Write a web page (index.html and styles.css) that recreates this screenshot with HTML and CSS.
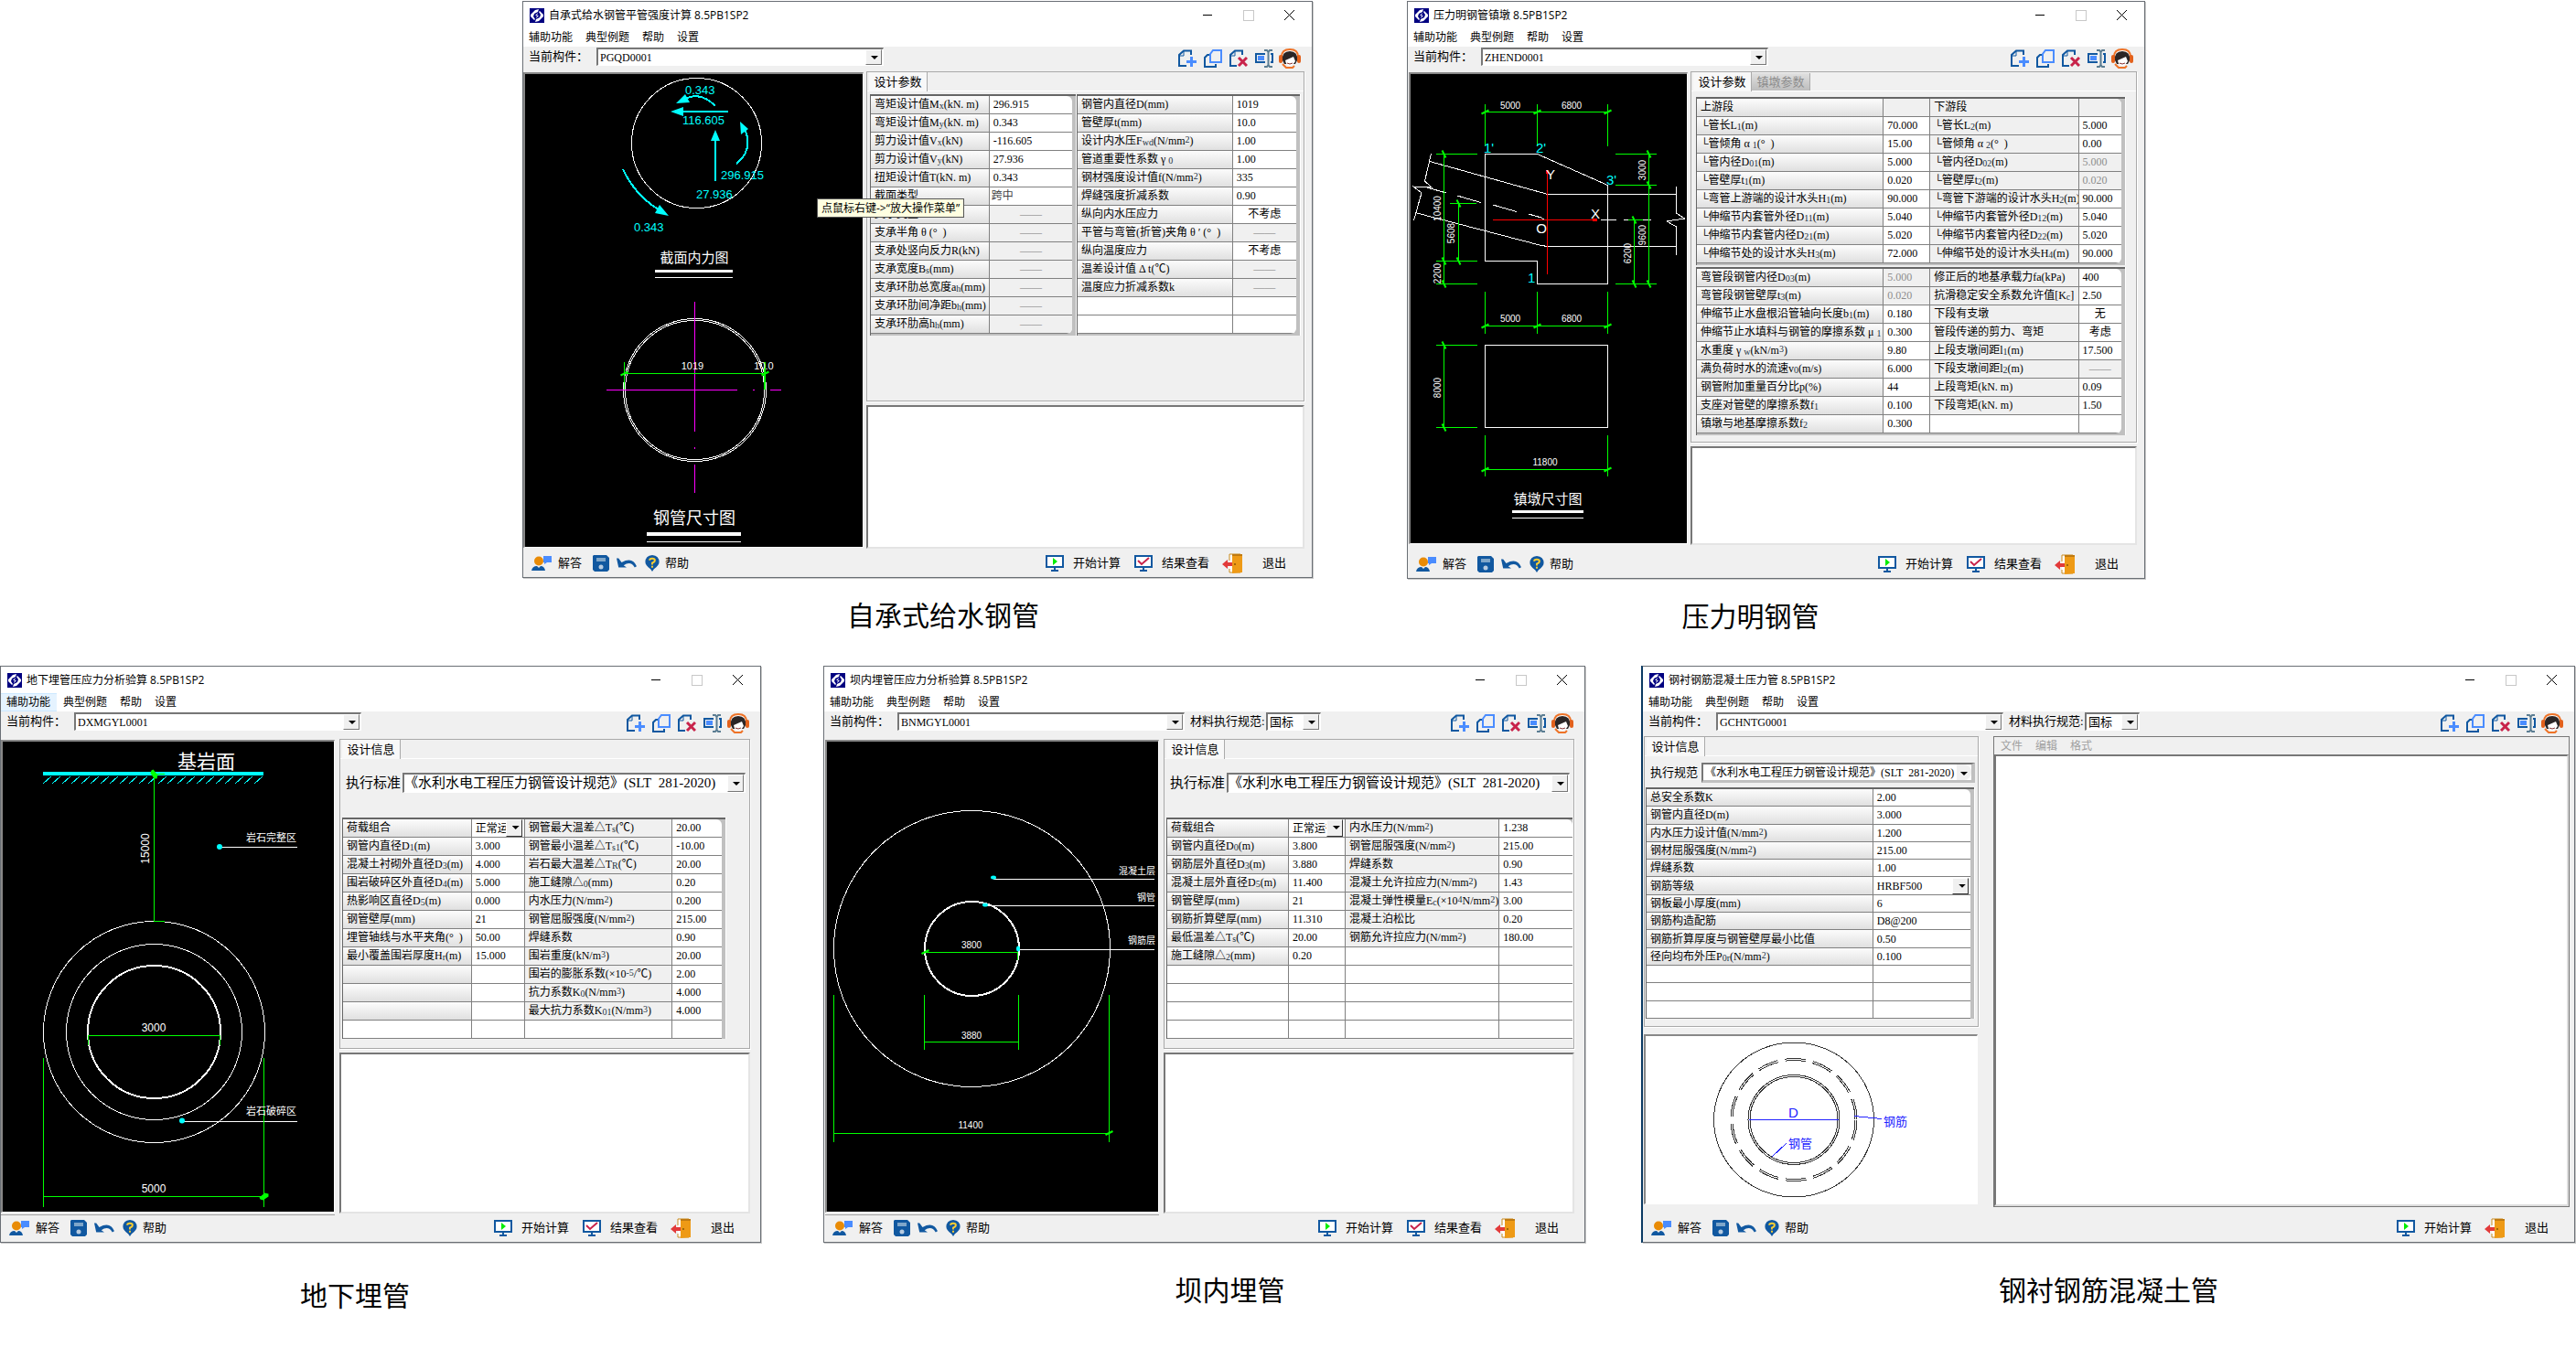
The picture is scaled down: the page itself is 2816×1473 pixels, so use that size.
FILE: index.html
```html
<!DOCTYPE html>
<html lang="zh-CN">
<head>
<meta charset="utf-8">
<title>压力钢管计算程序</title>
<link rel="stylesheet" href="styles.css">
</head>
<body>
<svg class="defs" aria-hidden="true">
  <defs>
    <marker id="tick" markerUnits="userSpaceOnUse" markerWidth="12" markerHeight="12" viewBox="-6 -6 12 12" orient="auto"><path d="M-4 2L4-2" stroke="#0f0" stroke-width="2"/></marker>
    <marker id="blob" markerUnits="userSpaceOnUse" markerWidth="14" markerHeight="14" viewBox="-7 -7 14 14" orient="auto"><path d="M-5 1L1-4L5-3L5 0L-1 4L-4 3Z" fill="#0f0"/></marker>
    <symbol id="i-logo" viewBox="0 0 16 16"><rect width="16" height="16" fill="#000080"/><path d="M10 1L6 2L1 7L1 9L5 13L6 12L4 9L5 6L9 4Z M6 15L10 14L15 9L15 7L11 3L10 4L12 7L11 10L7 12Z" fill="#fff"/><path d="M9 5L6 8H8L7 11L10 8H8Z" fill="#fff"/></symbol>
    <symbol id="i-add" viewBox="0 0 20 20"><path d="M9 18H1V6L6 1.500H14V6" fill="none" stroke="#1158a0" stroke-width="2"/><path d="M1 7H6V1" fill="none" stroke="#1158a0"/><path d="M14.500 8V19M9 13.500H20" stroke="#4a8cff" stroke-width="3"/></symbol>
    <symbol id="i-copy" viewBox="0 0 20 20"><path d="M6 6H4L1 9V19H13V16" fill="none" stroke="#1158a0" stroke-width="2"/><path d="M7 5L10 1H19V14H7Z" fill="none" stroke="#4a8cff" stroke-width="2"/></symbol>
    <symbol id="i-del" viewBox="0 0 20 20"><path d="M8 18H1V6L6 1.500H14V6" fill="none" stroke="#1158a0" stroke-width="2"/><path d="M1 7H6V1" fill="none" stroke="#1158a0"/><path d="M10 9L19 18M19 9L10 18" stroke="#c8234a" stroke-width="3"/></symbol>
    <symbol id="i-rename" viewBox="0 0 20 20"><path d="M11 5H1V14H11M17 5H19V14H17" fill="none" stroke="#1158a0" stroke-width="2"/><path d="M3 7H10V12H3Z" fill="#4a8cff"/><path d="M10 1H13L14.500 3L16 1H19M14.500 2V18M10 19H13L14.500 17L16 19H19" fill="none" stroke="#5b7d92" stroke-width="2"/></symbol>
    <symbol id="i-head" viewBox="0 0 24 22"><path d="M3 9Q3 1 12 1Q21 1 21 9" fill="#fff" stroke="#ee7328" stroke-width="2"/><rect x="0" y="7" width="4" height="9" rx="2" fill="#e2611c"/><rect x="20" y="7" width="4" height="9" rx="2" fill="#e2611c"/><path d="M4 13Q3 3 12 3Q21 3 20 13L18 17H6Z" fill="#2b2626"/><path d="M7 13L16 9L18 14Q15 19 12 19Q8 19 7 13Z" fill="#fff"/><path d="M9 16Q12 18 15 16" stroke="#833" fill="none"/><path d="M4 17L8 21H15L17 19" stroke="#ee7328" stroke-width="2" fill="none"/></symbol>
    <symbol id="i-user" viewBox="0 0 22 18"><circle cx="8" cy="6.500" r="5" fill="#e98b06"/><path d="M0 17Q1 12 6 12L8 14L10 12Q14 12 15 17Z" fill="#1158a0"/><path d="M13 1H22V8H17L14 10V8H13Z" fill="#4a8cff"/></symbol>
    <symbol id="i-disk" viewBox="0 0 18 18"><path d="M1 0H15L18 3V16L16 18H2L0 16V1Z" fill="#1158a0"/><rect x="4" y="3" width="10" height="4" fill="#7fa6c9"/><circle cx="9" cy="13" r="2.500" fill="#b7cbe0"/></symbol>
    <symbol id="i-undo" viewBox="0 0 20 12"><path d="M0 1L2 10H10L7 8Q14 3 18 10L20 9Q16-1 5 5L2 1Z" fill="#1158a0"/></symbol>
    <symbol id="i-help" viewBox="0 0 16 19"><path d="M8 0Q16 1 16 8Q16 12 10 16L8 19L6 16Q0 12 0 8Q0 1 8 0Z" fill="#1158a0"/><path d="M5 6Q5 4 8 4Q11 4 11 6Q11 8 8 9V11M8 12.500V14.500" stroke="#ffcf30" stroke-width="2" fill="none"/></symbol>
    <symbol id="i-run" viewBox="0 0 20 18"><path d="M1 1H19V13H1Z" fill="#fff" stroke="#1158a0" stroke-width="2"/><path d="M10 13V17M6 17H14" stroke="#1158a0" stroke-width="2"/><path d="M8 3V11L13 7Z" fill="#0e0"/></symbol>
    <symbol id="i-check" viewBox="0 0 20 18"><path d="M1 1H19V13H1Z" fill="#fff" stroke="#1158a0" stroke-width="2"/><path d="M10 13V17M6 17H14" stroke="#1158a0" stroke-width="2"/><path d="M4 6L8 10L16 3" stroke="#c8234a" stroke-width="2" fill="none"/></symbol>
    <symbol id="i-exit" viewBox="0 0 22 22"><path d="M8 1H20V21H8V17M8 8V1" fill="#fff" stroke="#c98a1c"/><path d="M11 1H22V21L11 22Z" fill="#ee9a16"/><path d="M11 1H22V3H11Z" fill="#c07a10"/><circle cx="14" cy="12" r="1" fill="#8a5407"/><path d="M0 12L6 7V10H11V14H6V17Z" fill="#e23a3a"/></symbol>
  </defs>
</svg>

<main class="page">
<section class="row row-top">

<figure class="shot shot-self">
  <div class="window">
    <header class="titlebar"><svg class="logo"><use href="#i-logo"/></svg><h2>自承式给水钢管平管强度计算 8.5PB1SP2</h2>
      <button class="wbtn min" aria-label="最小化"></button><button class="wbtn max" aria-label="最大化" disabled></button><button class="wbtn close" aria-label="关闭"></button></header>
    <nav class="menubar"><button>辅助功能</button><button>典型例题</button><button>帮助</button><button>设置</button></nav>
    <div class="toolbar"><label for="c1">当前构件：</label><span class="combo part"><select id="c1"><option>PGQD0001</option></select></span>
      <span class="tools"><button aria-label="新建"><svg><use href="#i-add"/></svg></button><button aria-label="复制"><svg><use href="#i-copy"/></svg></button><button aria-label="删除"><svg><use href="#i-del"/></svg></button><button aria-label="重命名"><svg><use href="#i-rename"/></svg></button><button class="agent" aria-label="客服"><svg><use href="#i-head"/></svg></button></span></div>
    <div class="work work-self">
      <div class="canvas">
        <svg viewBox="14 82 369 517" class="cad">
          <g class="w"><circle cx="201.500" cy="157.500" r="71"/><circle cx="199.500" cy="427.500" r="78"/><circle cx="199.500" cy="427.500" r="76"/><path d="M156 304.500H241M147 593.500H250"/><path d="M156 297.500H241" stroke-width="3"/><path d="M147 585H250" stroke-width="4"/></g>
          <g class="c" stroke-width="2"><path d="M222 117Q204 99 186 111M236 123H180M222 199V150M245 180Q264 165 254 142M121 186Q135 216 163 232"/></g>
          <g class="cf"><path d="M179 114L189 104L194 113ZM173 123L187 118V128ZM222 143L217 155H227ZM249 134L258 142L250 148ZM171 237L161 225L156 234Z"/></g>
          <g class="ct t13"><text x="189" y="104">0.343</text><text x="186" y="137">116.605</text><text x="228" y="197">296.915</text><text x="201" y="218">27.936</text><text x="133" y="254">0.343</text></g>
          <g class="m"><path d="M199.500 331V473M199.500 490V492M199.500 509V540M103 427.500H246M263 427.500H265M282 427.500H294"/></g>
          <g class="g"><path d="M122.500 409.500H276.500" marker-start="url(#tick)" marker-end="url(#tick)"/><path d="M122.500 397V427"/><path d="M276 397V427" stroke-width="2"/></g>
          <g class="wt mid"><text x="197" y="405" class="t11">1019</text><text x="275" y="405" class="t11">10.0</text><text x="199" y="288" class="t15">截面内力图</text><text x="199" y="574" class="t18">钢管尺寸图</text></g>
        </svg>
      </div>
      <div class="side">
        <section class="panel p-self">
          <div class="tabs"><button class="tab on">设计参数</button></div>
          <div class="body pair">
            <div class="frame foot"><table class="k-self-l"><colgroup><col><col></colgroup>
              <tr><th>弯矩设计值M<sub>x</sub>(kN. m)</th><td>296.915</td></tr>
              <tr><th>弯矩设计值M<sub>y</sub>(kN. m)</th><td>0.343</td></tr>
              <tr><th>剪力设计值V<sub>x</sub>(kN)</th><td>-116.605</td></tr>
              <tr><th>剪力设计值V<sub>y</sub>(kN)</th><td>27.936</td></tr>
              <tr><th>扭矩设计值T(kN. m)</th><td>0.343</td></tr>
              <tr><th>截面类型</th><td class="soft">跨中</td></tr>
              <tr><th>支承类型</th><td class="off">——</td></tr>
              <tr><th>支承半角 θ (°&nbsp; )</th><td class="off">——</td></tr>
              <tr><th>支承处竖向反力R(kN)</th><td class="off">——</td></tr>
              <tr><th>支承宽度B<sub>s</sub>(mm)</th><td class="off">——</td></tr>
              <tr><th>支承环肋总宽度a<sub>h</sub>(mm)</th><td class="off">——</td></tr>
              <tr><th>支承环肋间净距b<sub>h</sub>(mm)</th><td class="off">——</td></tr>
              <tr><th>支承环肋高h<sub>h</sub>(mm)</th><td class="off">——</td></tr>
            </table></div>
            <div class="frame foot"><table class="k-self-r"><colgroup><col><col></colgroup>
              <tr><th>钢管内直径D(mm)</th><td>1019</td></tr>
              <tr><th>管壁厚t(mm)</th><td>10.0</td></tr>
              <tr><th>设计内水压F<sub>wd</sub>(N/mm<sup>2</sup>)</th><td>1.00</td></tr>
              <tr><th>管道重要性系数 γ <sub>0</sub></th><td>1.00</td></tr>
              <tr><th>钢材强度设计值f(N/mm<sup>2</sup>)</th><td>335</td></tr>
              <tr><th>焊缝强度折减系数</th><td>0.90</td></tr>
              <tr><th>纵向内水压应力</th><td class="pick">不考虑</td></tr>
              <tr><th>平管与弯管(折管)夹角 θ ′ (°&nbsp; )</th><td class="off">——</td></tr>
              <tr><th>纵向温度应力</th><td class="pick">不考虑</td></tr>
              <tr><th>温差设计值 Δ t(℃)</th><td class="off">——</td></tr>
              <tr><th>温度应力折减系数k</th><td class="off">——</td></tr>
              <tr><td></td><td></td></tr>
              <tr><td></td><td></td></tr>
            </table></div>
          </div>
        </section>
        <textarea class="log" aria-label="计算信息"></textarea>
      </div>
      <div class="tip" role="tooltip">点鼠标右键-&gt;“放大操作菜单”</div>
    </div>
    <footer class="status"><button class="txt"><svg class="s-user"><use href="#i-user"/></svg>解答</button><button aria-label="保存"><svg><use href="#i-disk"/></svg></button><button aria-label="撤销"><svg><use href="#i-undo"/></svg></button><button class="help"><svg><use href="#i-help"/></svg>帮助</button>
      <span class="actions"><button><svg><use href="#i-run"/></svg>开始计算</button><button><svg><use href="#i-check"/></svg>结果查看</button><button class="exit"><svg><use href="#i-exit"/></svg>退出</button></span></footer>
  </div>
  <figcaption class="lean-right">自承式给水钢管</figcaption>
</figure>

<figure class="shot shot-open">
  <div class="window">
    <header class="titlebar"><svg class="logo"><use href="#i-logo"/></svg><h2>压力明钢管镇墩 8.5PB1SP2</h2>
      <button class="wbtn min" aria-label="最小化"></button><button class="wbtn max" aria-label="最大化" disabled></button><button class="wbtn close" aria-label="关闭"></button></header>
    <nav class="menubar"><button>辅助功能</button><button>典型例题</button><button>帮助</button><button>设置</button></nav>
    <div class="toolbar"><label for="c2">当前构件：</label><span class="combo part"><select id="c2"><option>ZHEND0001</option></select></span>
      <span class="tools"><button aria-label="新建"><svg><use href="#i-add"/></svg></button><button aria-label="复制"><svg><use href="#i-copy"/></svg></button><button aria-label="删除"><svg><use href="#i-del"/></svg></button><button aria-label="重命名"><svg><use href="#i-rename"/></svg></button><button class="agent" aria-label="客服"><svg><use href="#i-head"/></svg></button></span></div>
    <div class="work work-open">
      <div class="canvas">
        <svg viewBox="12 80 302 513" class="cad">
          <g class="w"><path d="M93.500 167.500H150.500L227.500 201.500V309.500H150.500V284.500H93.500ZM93.500 376.500H227.500V466.500H93.500Z"/>
            <path d="M33 175.500L162 211.500H302.500M17 231.500L155 267.500L162 268.500H302.500M30 204L51 210M63 213L89 220.500M102 223L128 230.500M141 233L155 237L158 239.500H169M220 239.500H237M245 239.500H275"/>
            <path d="M34.500 167L27.500 197L35 204L15 203L24 210L15.500 240M302.500 203V232L311.500 238L292 241L302.500 247V278"/><path d="M123 565.500H201"/><path d="M123 558.500H201" stroke-width="3"/></g>
          <g class="g"><path d="M93.500 121.500H150.500" marker-start="url(#tick)" marker-end="url(#tick)"/><path d="M150.500 121.500H227.500" marker-end="url(#tick)"/><path d="M93.500 355.500H150.500" marker-start="url(#tick)" marker-end="url(#tick)"/><path d="M150.500 355.500H227.500" marker-end="url(#tick)"/><path d="M93.500 512.500H227.500" marker-start="url(#tick)" marker-end="url(#tick)"/>
            <path d="M48.500 167.500V284.500" marker-start="url(#tick)" marker-end="url(#tick)"/><path d="M48.500 284.500V309.500" marker-end="url(#tick)"/><path d="M64.500 221.500V284.500" marker-start="url(#tick)" marker-end="url(#tick)"/><path d="M48.500 376.500V466.500" marker-start="url(#tick)" marker-end="url(#tick)"/><path d="M272.500 167.500V201.500" marker-start="url(#tick)" marker-end="url(#tick)"/><path d="M272.500 201.500V309.500" marker-end="url(#tick)"/><path d="M256.500 239.500V309.500" marker-start="url(#tick)" marker-end="url(#tick)"/>
            <path d="M93.500 113V159M150.500 113V159M227.500 113V159M93.500 318V364M150.500 318V364M227.500 318V364M93.500 475V520M227.500 475V520M40 167.500H85M40 284.500H85M40 309.500H85M55 221.500H84M40 376.500H85M40 466.500H85M236 167.500H281M236 201.500H281M236 309.500H281M250 239.500H266"/></g>
          <g class="r"><path d="M102 239.500H215M161.500 186V299"/><path d="M211 239.500H216M161.500 185V189" stroke-width="3"/></g>
          <g class="wt mid t10"><text x="121" y="118">5000</text><text x="188" y="118">6800</text><text x="121" y="351">5000</text><text x="188" y="351">6800</text><text x="159" y="508">11800</text>
            <text transform="translate(45 227) rotate(-90)">10400</text><text transform="translate(60 254) rotate(-90)">5608</text><text transform="translate(45 298) rotate(-90)">2200</text><text transform="translate(45 423) rotate(-90)">8000</text><text transform="translate(269 185) rotate(-90)">3000</text><text transform="translate(269 256) rotate(-90)">9600</text><text transform="translate(253 276) rotate(-90)">6200</text></g>
          <g class="wt mid t15"><text x="155" y="254">O</text><text x="165" y="195">Y</text><text x="214" y="238">X</text><text x="162" y="550">镇墩尺寸图</text></g>
          <g class="ct t15"><text x="92" y="166">1'</text><text x="149" y="166">2'</text><text x="226" y="201">3'</text><text x="140" y="308">1</text></g>
        </svg>
      </div>
      <div class="side">
        <section class="panel p-open">
          <div class="tabs"><button class="tab on">设计参数</button><button class="tab" disabled>镇墩参数</button></div>
          <div class="body stack">
            <div class="frame foot"><table class="k-open flat3"><colgroup><col><col><col><col></colgroup>
              <tr><th>上游段</th><td class="off"></td><th>下游段</th><td class="off"></td></tr>
              <tr><th>└管长L<sub>1</sub>(m)</th><td>70.000</td><th>└管长L<sub>2</sub>(m)</th><td>5.000</td></tr>
              <tr><th>└管倾角 α <sub>1</sub>(°&nbsp; )</th><td>15.00</td><th>└管倾角 α <sub>2</sub>(°&nbsp; )</th><td>0.00</td></tr>
              <tr><th>└管内径D<sub>01</sub>(m)</th><td>5.000</td><th>└管内径D<sub>02</sub>(m)</th><td class="dim">5.000</td></tr>
              <tr><th>└管壁厚t<sub>1</sub>(m)</th><td>0.020</td><th>└管壁厚t<sub>2</sub>(m)</th><td class="dim">0.020</td></tr>
              <tr><th>└弯管上游端的设计水头H<sub>1</sub>(m)</th><td>90.000</td><th>└弯管下游端的设计水头H<sub>2</sub>(m)</th><td>90.000</td></tr>
              <tr><th>└伸缩节内套管外径D<sub>11</sub>(m)</th><td>5.040</td><th>└伸缩节内套管外径D<sub>12</sub>(m)</th><td>5.040</td></tr>
              <tr><th>└伸缩节内套管内径D<sub>21</sub>(m)</th><td>5.020</td><th>└伸缩节内套管内径D<sub>22</sub>(m)</th><td>5.020</td></tr>
              <tr><th>└伸缩节处的设计水头H<sub>3</sub>(m)</th><td>72.000</td><th>└伸缩节处的设计水头H<sub>4</sub>(m)</th><td>90.000</td></tr>
            </table></div>
            <div class="frame foot"><table class="k-open flat3"><colgroup><col><col><col><col></colgroup>
              <tr><th>弯管段钢管内径D<sub>03</sub>(m)</th><td class="dim">5.000</td><th>修正后的地基承载力fa(kPa)</th><td>400</td></tr>
              <tr><th>弯管段钢管壁厚t<sub>3</sub>(m)</th><td class="dim">0.020</td><th>抗滑稳定安全系数允许值[K<sub>c</sub>]</th><td>2.50</td></tr>
              <tr><th>伸缩节止水盘根沿管轴向长度b<sub>1</sub>(m)</th><td>0.180</td><th>下段有支墩</th><td class="pick">无</td></tr>
              <tr><th>伸缩节止水填料与钢管的摩擦系数 μ <sub>1</sub></th><td>0.300</td><th>管段传递的剪力、弯矩</th><td class="pick">考虑</td></tr>
              <tr><th>水重度 γ <sub>w</sub>(kN/m<sup>3</sup>)</th><td>9.80</td><th>上段支墩间距l<sub>1</sub>(m)</th><td>17.500</td></tr>
              <tr><th>满负荷时水的流速v<sub>0</sub>(m/s)</th><td>6.000</td><th>下段支墩间距l<sub>2</sub>(m)</th><td class="off">——</td></tr>
              <tr><th>钢管附加重量百分比p(%)</th><td>44</td><th>上段弯矩(kN. m)</th><td>0.09</td></tr>
              <tr><th>支座对管壁的摩擦系数f<sub>1</sub></th><td>0.100</td><th>下段弯矩(kN. m)</th><td>1.50</td></tr>
              <tr><th>镇墩与地基摩擦系数f<sub>2</sub></th><td>0.300</td><td></td><td></td></tr>
            </table></div>
          </div>
        </section>
        <textarea class="log" aria-label="计算信息"></textarea>
      </div>
    </div>
    <footer class="status"><button class="txt"><svg class="s-user"><use href="#i-user"/></svg>解答</button><button aria-label="保存"><svg><use href="#i-disk"/></svg></button><button aria-label="撤销"><svg><use href="#i-undo"/></svg></button><button class="help"><svg><use href="#i-help"/></svg>帮助</button>
      <span class="actions"><button><svg><use href="#i-run"/></svg>开始计算</button><button><svg><use href="#i-check"/></svg>结果查看</button><button class="exit"><svg><use href="#i-exit"/></svg>退出</button></span></footer>
  </div>
  <figcaption class="lean-left">压力明钢管</figcaption>
</figure>
</section>

<section class="row row-bottom">

<figure class="shot shot-under">
  <div class="window">
    <header class="titlebar"><svg class="logo"><use href="#i-logo"/></svg><h2>地下埋管压应力分析验算 8.5PB1SP2</h2>
      <button class="wbtn min" aria-label="最小化"></button><button class="wbtn max" aria-label="最大化" disabled></button><button class="wbtn close" aria-label="关闭"></button></header>
    <nav class="menubar"><button class="hot">辅助功能</button><button>典型例题</button><button>帮助</button><button>设置</button></nav>
    <div class="toolbar roomy"><label for="c3">当前构件：</label><span class="combo part"><select id="c3"><option>DXMGYL0001</option></select></span>
      <span class="tools"><button aria-label="新建"><svg><use href="#i-add"/></svg></button><button aria-label="复制"><svg><use href="#i-copy"/></svg></button><button aria-label="删除"><svg><use href="#i-del"/></svg></button><button aria-label="重命名"><svg><use href="#i-rename"/></svg></button><button class="agent" aria-label="客服"><svg><use href="#i-head"/></svg></button></span></div>
    <div class="work work-under">
      <div class="canvas ruled">
        <svg viewBox="3 90 362 514" class="cad">
          <g class="c"><path d="M47 125H288" stroke-width="4"/><path d="M56 128L47 136M66 128L57 136M77 128L68 136M87 128L78 136M98 128L89 136M108 128L99 136M119 128L110 136M129 128L120 136M140 128L131 136M150 128L141 136M161 128L152 136M171 128L162 136M182 128L173 136M192 128L183 136M203 128L194 136M213 128L204 136M224 128L215 136M234 128L225 136M245 128L236 136M255 128L246 136M266 128L257 136M276 128L267 136M287 128L278 136"/></g>
          <g class="w"><circle cx="168.500" cy="407.500" r="121"/><circle cx="168.500" cy="407.500" r="96"/><circle cx="168.500" cy="407.500" r="72.500" stroke-width="2"/><path d="M240 205.500H325M199 505.500H325"/></g>
          <g class="cf"><circle cx="240" cy="205" r="3"/><circle cx="199" cy="504.500" r="3"/></g>
          <g class="g"><path d="M168.500 125.500V286.500M96.500 411.500H240.500M47.500 587.500H288.500" marker-start="url(#blob)" marker-end="url(#blob)"/><path d="M168 125.500H180M168 286.500H180M96.500 411V422M240.500 411V422M47.500 436V599M288.500 436V599"/></g>
          <g class="wt mid t12"><text x="168" y="407">3000</text><text x="168" y="583">5000</text><text transform="translate(163 207) rotate(-90)">15000</text></g>
          <g class="wt"><text x="194" y="119" class="t21">基岩面</text><text x="269" y="199" class="t11">岩石完整区</text><text x="269" y="498" class="t11">岩石破碎区</text></g>
        </svg>
      </div>
      <div class="side">
        <section class="panel p-buried">
          <div class="tabs"><button class="tab on">设计信息</button></div>
          <div class="body">
            <div class="code"><label for="s3">执行标准</label><span class="combo"><select id="s3"><option>《水利水电工程压力钢管设计规范》(SLT&nbsp; 281-2020)</option></select></span></div>
            <div class="frame f-under"><table class="k-under flat3"><colgroup><col><col><col><col></colgroup>
              <tr><th>荷载组合</th><td class="drop"><span class="combo flat"><select aria-label="荷载组合"><option>正常运行工况</option></select></span></td><th>钢管最大温差△T<sub>s</sub>(℃)</th><td>20.00</td></tr>
              <tr><th>钢管内直径D<sub>1</sub>(m)</th><td>3.000</td><th>钢管最小温差△T<sub>s1</sub>(℃)</th><td>-10.00</td></tr>
              <tr><th>混凝土衬砌外直径D<sub>3</sub>(m)</th><td>4.000</td><th>岩石最大温差△T<sub>R</sub>(℃)</th><td>20.00</td></tr>
              <tr><th>围岩破碎区外直径D<sub>4</sub>(m)</th><td>5.000</td><th>施工缝隙△<sub>0</sub>(mm)</th><td>0.20</td></tr>
              <tr><th>热影响区直径D<sub>5</sub>(m)</th><td>0.000</td><th>内水压力(N/mm<sup>2</sup>)</th><td>0.200</td></tr>
              <tr><th>钢管壁厚(mm)</th><td>21</td><th>钢管屈服强度(N/mm<sup>2</sup>)</th><td>215.00</td></tr>
              <tr><th>埋管轴线与水平夹角(°&nbsp; )</th><td>50.00</td><th>焊缝系数</th><td>0.90</td></tr>
              <tr><th>最小覆盖围岩厚度H<sub>r</sub>(m)</th><td>15.000</td><th>围岩重度(kN/m<sup>3</sup>)</th><td>20.00</td></tr>
              <tr><th></th><td></td><th>围岩的膨胀系数(×10<sup>-5</sup>/℃)</th><td>2.00</td></tr>
              <tr><th></th><td></td><th>抗力系数K<sub>0</sub>(N/mm<sup>3</sup>)</th><td>4.000</td></tr>
              <tr><th></th><td></td><th>最大抗力系数K<sub>01</sub>(N/mm<sup>3</sup>)</th><td>4.000</td></tr>
              <tr><td></td><td></td><td></td><td></td></tr>
            </table></div>
          </div>
        </section>
        <textarea class="log" aria-label="计算信息"></textarea>
      </div>
    </div>
    <footer class="status"><button class="txt"><svg class="s-user"><use href="#i-user"/></svg>解答</button><button aria-label="保存"><svg><use href="#i-disk"/></svg></button><button aria-label="撤销"><svg><use href="#i-undo"/></svg></button><button class="help"><svg><use href="#i-help"/></svg>帮助</button>
      <span class="actions"><button><svg><use href="#i-run"/></svg>开始计算</button><button><svg><use href="#i-check"/></svg>结果查看</button><button class="exit"><svg><use href="#i-exit"/></svg>退出</button></span></footer>
  </div>
  <figcaption class="lean-left low">地下埋管</figcaption>
</figure>

<figure class="shot shot-dam">
  <div class="window">
    <header class="titlebar"><svg class="logo"><use href="#i-logo"/></svg><h2>坝内埋管压应力分析验算 8.5PB1SP2</h2>
      <button class="wbtn min" aria-label="最小化"></button><button class="wbtn max" aria-label="最大化" disabled></button><button class="wbtn close" aria-label="关闭"></button></header>
    <nav class="menubar"><button>辅助功能</button><button>典型例题</button><button>帮助</button><button>设置</button></nav>
    <div class="toolbar roomy"><label for="c4">当前构件：</label><span class="combo part"><select id="c4"><option>BNMGYL0001</option></select></span><label for="m4" class="mat">材料执行规范:</label><span class="combo mat-combo"><select id="m4"><option>国标</option></select></span>
      <span class="tools"><button aria-label="新建"><svg><use href="#i-add"/></svg></button><button aria-label="复制"><svg><use href="#i-copy"/></svg></button><button aria-label="删除"><svg><use href="#i-del"/></svg></button><button aria-label="重命名"><svg><use href="#i-rename"/></svg></button><button class="agent" aria-label="客服"><svg><use href="#i-head"/></svg></button></span></div>
    <div class="work work-dam">
      <div class="canvas ruled">
        <svg viewBox="14 92 362 513" class="cad">
          <g class="w"><circle cx="172.500" cy="318" r="151"/><circle cx="172.500" cy="318" r="51.500" stroke-width="2"/><path d="M196 241.500H372M187 270.500H372M223 318.500H372"/></g>
          <g class="cf"><ellipse cx="196" cy="240" rx="3" ry="2"/><ellipse cx="187" cy="270" rx="3" ry="2"/><ellipse cx="223" cy="318" rx="2" ry="3"/></g>
          <g class="g"><path d="M121.500 321.500H223M120.500 419.500H223.500M21.500 519.500H322.500" marker-start="url(#tick)" marker-end="url(#tick)"/><path d="M120.500 368V428M223.500 368V428M21.500 368V529M322.500 368V529M222.500 321V330"/></g>
          <g class="wt mid t10"><text x="172" y="317">3800</text><text x="172" y="416">3880</text><text x="171" y="514">11400</text></g>
          <g class="wt end t10"><text x="373" y="236">混凝土层</text><text x="373" y="265">钢管</text><text x="373" y="312">钢筋层</text></g>
        </svg>
      </div>
      <div class="side">
        <section class="panel p-buried">
          <div class="tabs"><button class="tab on">设计信息</button></div>
          <div class="body">
            <div class="code"><label for="s4">执行标准</label><span class="combo"><select id="s4"><option>《水利水电工程压力钢管设计规范》(SLT&nbsp; 281-2020)</option></select></span></div>
            <div class="frame bare"><table class="k-dam flat3"><colgroup><col><col><col><col></colgroup>
              <tr><th>荷载组合</th><td class="drop"><span class="combo flat"><select aria-label="荷载组合"><option>正常运行工况</option></select></span></td><th>内水压力(N/mm<sup>2</sup>)</th><td>1.238</td></tr>
              <tr><th>钢管内直径D<sub>0</sub>(m)</th><td>3.800</td><th>钢管屈服强度(N/mm<sup>2</sup>)</th><td>215.00</td></tr>
              <tr><th>钢筋层外直径D<sub>3</sub>(m)</th><td>3.880</td><th>焊缝系数</th><td>0.90</td></tr>
              <tr><th>混凝土层外直径D<sub>5</sub>(m)</th><td>11.400</td><th>混凝土允许拉应力(N/mm<sup>2</sup>)</th><td>1.43</td></tr>
              <tr><th>钢管壁厚(mm)</th><td>21</td><th>混凝土弹性模量E<sub>c</sub>(×10<sup>4</sup>N/mm<sup>2</sup>)</th><td>3.00</td></tr>
              <tr><th>钢筋折算壁厚(mm)</th><td>11.310</td><th>混凝土泊松比</th><td>0.20</td></tr>
              <tr><th>最低温差△T<sub>s</sub>(℃)</th><td>20.00</td><th>钢筋允许拉应力(N/mm<sup>2</sup>)</th><td>180.00</td></tr>
              <tr><th>施工缝隙△<sub>2</sub>(mm)</th><td>0.20</td><td></td><td></td></tr>
              <tr><td></td><td></td><td></td><td></td></tr>
              <tr><td></td><td></td><td></td><td></td></tr>
              <tr><td></td><td></td><td></td><td></td></tr>
              <tr><td></td><td></td><td></td><td></td></tr>
            </table></div>
          </div>
        </section>
        <textarea class="log" aria-label="计算信息"></textarea>
      </div>
    </div>
    <footer class="status"><button class="txt"><svg class="s-user"><use href="#i-user"/></svg>解答</button><button aria-label="保存"><svg><use href="#i-disk"/></svg></button><button aria-label="撤销"><svg><use href="#i-undo"/></svg></button><button class="help"><svg><use href="#i-help"/></svg>帮助</button>
      <span class="actions"><button><svg><use href="#i-run"/></svg>开始计算</button><button><svg><use href="#i-check"/></svg>结果查看</button><button class="exit"><svg><use href="#i-exit"/></svg>退出</button></span></footer>
  </div>
  <figcaption class="lean-right">坝内埋管</figcaption>
</figure>

<figure class="shot shot-lined">
  <div class="window navy">
    <header class="titlebar"><svg class="logo"><use href="#i-logo"/></svg><h2>钢衬钢筋混凝土压力管 8.5PB1SP2</h2>
      <button class="wbtn min" aria-label="最小化"></button><button class="wbtn max" aria-label="最大化" disabled></button><button class="wbtn close" aria-label="关闭"></button></header>
    <nav class="menubar"><button>辅助功能</button><button>典型例题</button><button>帮助</button><button>设置</button></nav>
    <div class="toolbar"><label for="c5">当前构件：</label><span class="combo part"><select id="c5"><option>GCHNTG0001</option></select></span><label for="m5" class="mat">材料执行规范:</label><span class="combo mat-combo"><select id="m5"><option>国标</option></select></span>
      <span class="tools"><button aria-label="新建"><svg><use href="#i-add"/></svg></button><button aria-label="复制"><svg><use href="#i-copy"/></svg></button><button aria-label="删除"><svg><use href="#i-del"/></svg></button><button aria-label="重命名"><svg><use href="#i-rename"/></svg></button><button class="agent" aria-label="客服"><svg><use href="#i-head"/></svg></button></span></div>
    <div class="work work-lined">
      <div class="side">
        <section class="panel p-lined">
          <div class="tabs"><button class="tab on">设计信息</button></div>
          <div class="body">
            <div class="code small"><label for="s5">执行规范</label><span class="combo soft-end"><select id="s5"><option>《水利水电工程压力钢管设计规范》(SLT&nbsp; 281-2020)</option></select></span></div>
            <div class="frame f-lined"><table class="k-lined"><colgroup><col><col></colgroup>
              <tr><th>总安全系数K</th><td>2.00</td></tr>
              <tr><th>钢管内直径D(m)</th><td>3.000</td></tr>
              <tr><th>内水压力设计值(N/mm<sup>2</sup>)</th><td>1.200</td></tr>
              <tr><th>钢材屈服强度(N/mm<sup>2</sup>)</th><td>215.00</td></tr>
              <tr><th>焊缝系数</th><td>1.00</td></tr>
              <tr><th>钢筋等级</th><td class="drop"><span class="combo flat"><select aria-label="钢筋等级"><option>HRBF500</option></select></span></td></tr>
              <tr><th>钢板最小厚度(mm)</th><td>6</td></tr>
              <tr><th>钢筋构造配筋</th><td>D8@200</td></tr>
              <tr><th>钢筋折算厚度与钢管壁厚最小比值</th><td>0.50</td></tr>
              <tr><th>径向均布外压P<sub>0r</sub>(N/mm<sup>2</sup>)</th><td>0.100</td></tr>
              <tr><td></td><td></td></tr>
              <tr><td></td><td></td></tr>
              <tr><td></td><td></td></tr>
            </table></div>
          </div>
        </section>
        <div class="canvas paper">
          <svg viewBox="9 415 362 175" class="cad">
            <g class="k"><ellipse cx="171" cy="502.500" rx="87.500" ry="84.500"/><ellipse cx="171" cy="502.500" rx="69" ry="67" stroke-dasharray="23 8"/><ellipse cx="171" cy="502.500" rx="67" ry="65" stroke-dasharray="22.300 7.800"/><ellipse cx="171" cy="502.500" rx="50" ry="49"/><ellipse cx="171" cy="502.500" rx="48" ry="47"/></g>
            <g class="b"><path d="M122 502.500H220M147 543L163 528M237 498.500L267 501.500"/></g>
            <g class="bt"><text x="165" y="500" class="t15">D</text><text x="165" y="533" class="t13">钢管</text><text x="269" y="509" class="t13">钢筋</text></g>
          </svg>
        </div>
      </div>
      <section class="editor">
        <nav class="editmenu"><button disabled>文件</button><button disabled>编辑</button><button disabled>格式</button></nav>
        <textarea aria-label="计算书"></textarea>
      </section>
    </div>
    <footer class="status"><button class="txt"><svg class="s-user"><use href="#i-user"/></svg>解答</button><button aria-label="保存"><svg><use href="#i-disk"/></svg></button><button aria-label="撤销"><svg><use href="#i-undo"/></svg></button><button class="help"><svg><use href="#i-help"/></svg>帮助</button>
      <span class="actions"><button><svg><use href="#i-run"/></svg>开始计算</button><button class="exit"><svg><use href="#i-exit"/></svg>退出</button></span></footer>
  </div>
  <figcaption>钢衬钢筋混凝土管</figcaption>
</figure>
</section>
</main>
</body>
</html>
```
FILE: styles.css
```css
:root {
  --face: #f0f0f0;
  --line: #808080;
  --strip: #c0c0c0;
  --song: "Liberation Serif", "Noto Sans CJK SC", serif;
  --ui: "Open Sans", "Noto Sans CJK SC", sans-serif;
}
* { box-sizing: border-box; }
body { margin: 0; background: #fff; color: #000; font: 12px/16px var(--song); }
button, select, textarea { font: inherit; color: inherit; margin: 0; border-radius: 0; }
button { background: none; border: 0; padding: 0; }
.defs { position: absolute; width: 0; height: 0; }

/* Page rows */
.page { min-height: 100vh; }
.row { display: grid; }
.row-top { padding-top: 1px; grid-template-columns: 571fr 864fr 103fr 807fr 471fr; }
.row-bottom { padding-top: 36px; grid-template-columns: 832fr 68fr 833fr 62fr 1020fr 1fr; }
.shot { margin: 0; min-width: 0; }
.shot-self { grid-column: 2; }
.shot-open { grid-column: 4; }
.shot-under { grid-column: 1; }
.shot-dam { grid-column: 3; }
.shot-lined { grid-column: 5; }
figcaption { font: 30px/40px "Noto Sans CJK SC", sans-serif; text-align: center; margin-top: 19px; }
.row-bottom figcaption { margin-top: 30px; }
.row-bottom figcaption.low { margin-top: 36px; }
.lean-right { padding-left: 56px; }
.lean-left { padding-right: 56px; }

/* Window chrome */
.window { background: var(--face); border: 1px solid #6a6f75; box-shadow: 1px 1px 0 #c8c8c8; }
.window.navy { border-left-color: #0b3a63; box-shadow: -1px 0 0 #0b3a63, 1px 1px 0 #c8c8c8; }
.titlebar { display: flex; align-items: center; height: 29px; padding: 0 2px 0 7px; background: #fff; }
.logo { width: 16px; height: 16px; margin-right: 5px; }
h2 { flex: 1; margin: 0; font: 12px/16px var(--ui); white-space: nowrap; }
.wbtn { display: flex; align-items: center; justify-content: center; width: 45px; height: 28px; }
.wbtn::before { content: ""; display: block; width: 10px; height: 10px; }
.min::before { height: 1px; background: #000; }
.max::before { border: 1px solid #c8c8c8; }
.close::before { width: 11px; height: 11px; background: linear-gradient(45deg, transparent 46%, #000 46% 54%, transparent 54%), linear-gradient(-45deg, transparent 46%, #000 46% 54%, transparent 54%); }
.menubar { display: flex; height: 20px; background: #fff; }
.menubar button { padding: 0 7px; font: 12px/18px var(--ui); border: 1px solid transparent; border-width: 1px 0; }
.menubar button:first-child { padding-left: 6px; }
.menubar .hot { background: #e5f3ff; border-color: #cce8ff; }

.toolbar { display: flex; align-items: flex-start; height: 27px; padding: 1px 12px 0 6px; font-size: 13px; }
.toolbar.roomy { height: 30px; }
.toolbar label { width: 74px; line-height: 20px; white-space: nowrap; }
.toolbar .mat { width: 83px; margin-left: 6px; }
.part { width: 314px; }
.mat-combo { width: 60px; }
.tools { display: flex; gap: 8px; margin: 1px 0 0 auto; }
.tools svg { display: block; width: 20px; height: 20px; }
.tools .agent { margin-left: -2px; }
.agent svg { width: 24px; height: 22px; }

/* Sunken combo boxes */
.combo { position: relative; display: block; height: 20px; background: #fff; border: solid; border-width: 2px 1px 1px 2px; border-color: #777 #fff #fff #777; }
.combo select { display: block; width: 100%; height: 100%; padding: 0 18px 0 2px; border: 0; background: none; appearance: none; font-size: 12px; line-height: 16px; }
.mat-combo select { font-size: 13px; }
.combo::before { content: ""; position: absolute; top: 0; right: 1px; bottom: 0; width: 16px; background: var(--face); border: 1px solid; border-color: #fff #777 #777 #fff; pointer-events: none; }
.combo::after { content: ""; position: absolute; top: 7px; right: 5px; width: 8px; height: 4px; background: #000; clip-path: polygon(0 0, 100% 0, 50% 100%); pointer-events: none; }
.combo.flat { height: 19px; border: 0; }
.combo.flat select { padding-left: 4px; }
.combo.flat::before { right: 2px; border-color: #fff #333 #333 #fff; }
.combo.soft-end { border-right: 4px solid var(--strip); border-bottom: 3px solid var(--strip); }
.combo.soft-end::before { background: var(--face); border: 0; right: 0; border-radius: 0 8px 8px 0; }
.combo.soft-end::after { right: 4px; }

/* Working area */
.work { position: relative; display: grid; min-height: 522px; }
.work-self { grid-template-columns: 372fr 479fr; column-gap: 3px; padding-right: 8px; }
.work-open { grid-template-columns: 305fr 488fr; column-gap: 3px; padding: 0 8px 5px 1px; }
.work-under, .work-dam { grid-template-columns: 365fr 449fr; column-gap: 5px; padding-right: 11px; min-height: 519px; }
.work-dam { padding-left: 1px; }
.work-lined { grid-template-columns: 366fr 630fr; column-gap: 16px; padding: 0 5px 7px 1px; }
.canvas { margin: 1px 0; min-width: 0; background: #000; border: solid; border-width: 2px 1px 1px 2px; border-color: #888 #fff #fff #888; overflow: hidden; }
.canvas svg { display: block; width: 100%; height: 100%; }
.canvas.ruled { box-shadow: 0 2px 0 var(--face), 0 3px 0 #a0a0a0; }
.side { display: flex; flex-direction: column; gap: 4px; min-width: 0; }
.log { display: block; width: 100%; flex: 1; padding: 0; resize: none; background: #fff; border: 2px solid; border-color: #777 #e4e4e4 #e4e4e4 #777; }
.tip { position: absolute; left: 321px; top: 139px; height: 21px; padding: 0 4px; font: 12px/19px var(--ui); white-space: nowrap; background: #ffffe1; border: 1px solid #555; }

/* Tab panels */
.panel { border: 1px solid #a9a9a9; box-shadow: 1px 1px 0 #fff; }
.p-self { min-height: 361px; }
.p-open { min-height: 406px; }
.p-buried { min-height: 339px; }
.p-lined { min-height: 318px; }
.tabs { display: flex; height: 21px; padding-left: 2px; border-bottom: 1px solid #fff; }
.tab { width: 64px; height: 21px; font-size: 13px; line-height: 19px; background: #f8f8f8; border-right: 1px solid #aaa; }
.tab:disabled { height: 19px; margin-top: 1px; color: #8d8d8d; background: linear-gradient(#e0e0e0, #bdbdbd); }
.pair { display: grid; grid-template-columns: 225fr 244fr; column-gap: 1px; padding: 3px 4px 0 3px; }
.stack { display: grid; row-gap: 2px; padding: 6px 12px 0 5px; }
.code { display: grid; grid-template-columns: 60px 1fr; align-items: center; column-gap: 2px; padding: 15px 4px 27px 6px; font-size: 15px; }
.code label { line-height: 22px; white-space: nowrap; }
.code .combo { height: 22px; }
.code select { font-size: 15px; line-height: 19px; padding-left: 0; }
.code .combo::after { top: 8px; }
.code.small { grid-template-columns: 54px 1fr; padding: 7px 3px 5px 6px; font-size: 13px; }
.code.small select { font-size: 12px; padding-left: 2px; }

/* Parameter grids */
.frame { min-width: 0; background: var(--strip); border-top: 2px solid #666; border-left: 1px solid #666; padding-right: 4px; align-self: start; box-shadow: 1px 0 0 #fff; }
.frame.foot { padding-bottom: 2px; }
.f-under { margin: 0 26px 0 2px; }
.frame.bare { margin: 0 1px 0 2px; padding-right: 0; }
.f-lined { margin: 0 4px 0 1px; }
table { width: 100%; table-layout: fixed; border-collapse: separate; border-spacing: 0; background: #fff; border-radius: 0 6px 6px 0; overflow: hidden; }
.f-under table, .f-lined table, .bare table { border-radius: 0 6px 0 0; }
th, td { height: 20px; padding: 0 0 0 4px; border: solid var(--line); border-width: 0 1px 1px 0; font: 12px/19px var(--song); text-align: left; white-space: nowrap; overflow: hidden; }
.f-lined table { height: 251px; }
.f-lined th, .f-lined td { height: 19px; line-height: 18px; }
.f-lined .combo.flat { height: 18px; }
tr > :last-child { border-right: 0; }
th { background: linear-gradient(#fcfcfc, #e0e0e0); }
.flat3 th:nth-child(3) { background: var(--face); }
td.off { background: var(--face); color: #777; text-align: center; padding: 0; }
td.dim { background: var(--face); color: #8d8d8d; }
td.soft { padding-left: 2px; color: #444; }
td.pick { text-align: center; padding: 0; }
td.drop { padding: 0; }
sub, sup { font-size: 10px; line-height: 0; color: #234; }
sub { vertical-align: -1px; }
sup { vertical-align: 2px; }
.k-self-l col:first-child { width: 59%; }
.k-self-r col:first-child { width: 71%; }
.k-open col:nth-child(1) { width: 44%; }
.k-open col:nth-child(2) { width: 11%; }
.k-open col:nth-child(3) { width: 35%; }
.k-under col:nth-child(1) { width: 34%; }
.k-under col:nth-child(2) { width: 14%; }
.k-under col:nth-child(3) { width: 39%; }
.k-dam col:nth-child(1) { width: 30%; }
.k-dam col:nth-child(2) { width: 14%; }
.k-dam col:nth-child(3) { width: 38%; }
.k-lined col:first-child { width: 70%; }

/* Lined pipe window */
.work-lined .side { gap: 8px; }
.canvas.paper { flex: 1; margin: 0 1px 3px 0; min-height: 0; background: #fff; }
.editor { display: flex; flex-direction: column; border: 1px solid #777; min-width: 0; }
.editmenu { display: flex; gap: 14px; height: 19px; padding-left: 7px; }
.editmenu button { font: 12px/18px var(--ui); color: #a0a0a0; }
.editor textarea { flex: 1; width: 100%; padding: 0; resize: none; background: #fff; border: 2px solid; border-color: #777 #ddd #ddd #777; }

/* Bottom bar */
.status { display: flex; align-items: center; gap: 6px; height: 31px; padding: 0 28px 0 9px; font-size: 13px; }
.status button { display: flex; align-items: center; line-height: 18px; white-space: nowrap; }
.status svg { width: 22px; height: 18px; }
.status .txt { gap: 7px; padding-right: 4px; }
.status .help { gap: 3px; }
.actions { display: flex; gap: 14px; margin-left: auto; }
.actions button { gap: 9px; }
.actions .exit { gap: 22px; }
.actions .exit svg { height: 22px; }

/* Drawings */
.cad { font-family: "Liberation Sans", "Noto Sans CJK SC", sans-serif; }
.w, .c, .g, .m, .r, .k, .b { fill: none; shape-rendering: crispEdges; }
.w { stroke: #fff; }
.c { stroke: #0ff; }
.g { stroke: #0f0; }
.m { stroke: #f0f; }
.r { stroke: #f00; }
.k { stroke: #333; }
.b { stroke: #22f; }
.cf, .ct { fill: #0ff; }
.wt { fill: #fff; }
.bt { fill: #22f; }
.mid { text-anchor: middle; }
.end { text-anchor: end; }
.t10 { font-size: 10px; }
.t11 { font-size: 11px; }
.t12 { font-size: 12px; }
.t13 { font-size: 13px; }
.t15 { font-size: 15px; }
.t18 { font-size: 18px; }
.t21 { font-size: 21px; }
```
